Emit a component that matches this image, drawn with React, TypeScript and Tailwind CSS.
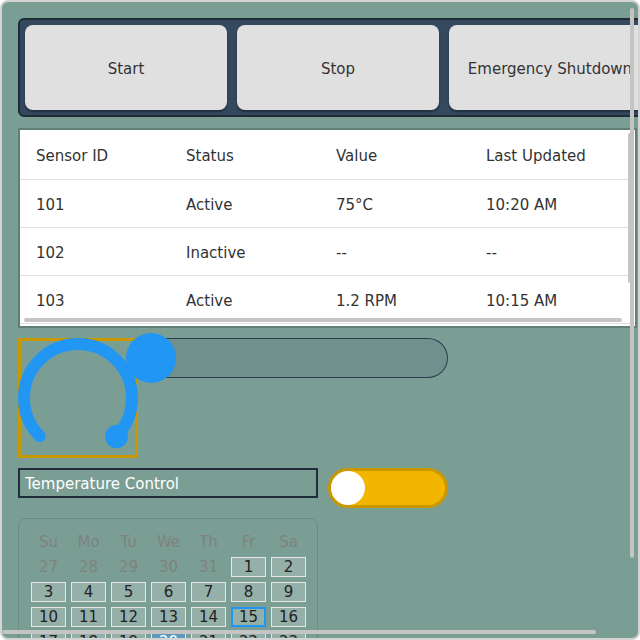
import React, { useState } from 'react';

const sensors = [
  { id: '101', status: 'Active', value: '75°C', updated: '10:20 AM' },
  { id: '102', status: 'Inactive', value: '--', updated: '--' },
  { id: '103', status: 'Active', value: '1.2 RPM', updated: '10:15 AM' },
  { id: '104', status: 'Active', value: '3.4 bar', updated: '10:05 AM' },
];

const weekdays = ['Su', 'Mo', 'Tu', 'We', 'Th', 'Fr', 'Sa'];

// the headless browser hides native scrollbars, so the thumbs are drawn on top
const thumb = 'pointer-events-none rounded-full bg-[#c4c4c4]';

const ControlBar: React.FC = () => (
  <div className="flex w-[640px] gap-[10px] rounded-md border-2 border-[#1e2b38] bg-[#34495e] p-[5px]">
    {['Start', 'Stop', 'Emergency Shutdown'].map(label => (
      <button
        key={label}
        className="h-[85px] w-[202px] shrink-0 rounded-lg bg-[#e0e0e0] pt-[3px] text-[15px] text-[#333] shadow-[0_2px_2px_rgba(0,0,0,0.35)]"
      >
        {label}
      </button>
    ))}
  </div>
);

const SensorTable: React.FC = () => (
  <div className="relative mt-px w-[619px]">
    <div className="h-[200px] w-[619px] overflow-hidden border-2 border-[#5f7f77] bg-white">
      <table className="w-[616px] table-fixed border-collapse text-left text-[15px] text-[#333]">
        <colgroup>
          <col className="w-[150px]" />
          <col className="w-[150px]" />
          <col className="w-[150px]" />
          <col className="w-[166px]" />
        </colgroup>
        <thead>
          <tr className="h-[49px] border-b border-[#e0e0e0]">
            <th className="pl-4 pt-1 font-normal">Sensor ID</th>
            <th className="pl-4 pt-1 font-normal">Status</th>
            <th className="pl-4 pt-1 font-normal">Value</th>
            <th className="pl-4 pt-1 font-normal">Last Updated</th>
          </tr>
        </thead>
        <tbody>
          {sensors.map(s => (
            <tr key={s.id} className="h-12 border-b border-[#e0e0e0]">
              <td className="pl-4 pt-1">{s.id}</td>
              <td className="pl-4 pt-1">{s.status}</td>
              <td className="pl-4 pt-1">{s.value}</td>
              <td className="pl-4 pt-1">{s.updated}</td>
            </tr>
          ))}
        </tbody>
      </table>
    </div>
    <div className={`absolute left-[610px] top-[5px] h-[150px] w-[4px] ${thumb}`} />
    <div className={`absolute left-[6px] top-[190px] h-[4px] w-[598px] ${thumb}`} />
  </div>
);

const Knob: React.FC = () => (
  <div className="h-[120px] w-[120px] shrink-0 border-[3px] border-[#c99700]">
    <svg width="120" height="120" viewBox="0 0 120 120" className="-m-[3px] block">
      <path
        d="M 21.8 98.2 A 54 54 0 1 1 98.2 98.2"
        fill="none"
        stroke="#2196f3"
        strokeWidth="12"
        strokeLinecap="round"
      />
      <circle cx="98.5" cy="98.5" r="11.5" fill="#2196f3" />
    </svg>
  </div>
);

const Slider: React.FC = () => (
  <div className="relative h-10 w-[310px] rounded-r-full border border-l-0 border-[#2c3e50] bg-[#6f908c]">
    <div className="absolute -left-[12px] -top-[6px] h-[50px] w-[50px] rounded-full bg-[#2196f3]" />
  </div>
);

const Toggle: React.FC = () => {
  const [on, setOn] = useState(false);
  return (
    <button
      onClick={() => setOn(!on)}
      className={`flex h-10 w-[120px] items-center rounded-full border-[3px] border-[#c99700] bg-[#f2b600] ${on ? 'justify-end' : 'justify-start'}`}
    >
      <span className="h-[34px] w-[34px] rounded-full bg-white" />
    </button>
  );
};

const Calendar: React.FC = () => {
  const prev = [27, 28, 29, 30, 31];
  const days = Array.from({ length: 31 }, (_, i) => i + 1);
  const next = [1, 2, 3];
  return (
    <div className="w-[300px] rounded-lg border border-[#6a8c84] px-3 pb-3 pt-[13px]">
      <div className="grid grid-cols-[repeat(7,35px)] gap-[5px] text-center text-[15px] leading-5">
        {weekdays.map(d => (
          <div key={d} className="h-5 text-[#7f8280]">{d}</div>
        ))}
        {prev.map(d => (
          <div key={`p${d}`} className="h-5 text-[#7f8280]">{d}</div>
        ))}
        {days.map(d => (
          <div
            key={d}
            className={
              d === 15
                ? 'h-5 border-2 border-[#2196f3] bg-[#94b0a9] leading-4 text-[#222]'
                : d === 20
                  ? 'h-5 border border-[#e6e6e6] bg-[#5b9bc0] leading-[18px] text-white'
                  : 'h-5 border border-[#e6e6e6] bg-[#94b0a9] leading-[18px] text-[#222]'
            }
          >
            {d}
          </div>
        ))}
        {next.map(d => (
          <div key={`n${d}`} className="h-5 text-[#7f8280]">{d}</div>
        ))}
      </div>
    </div>
  );
};

const App: React.FC = () => {
  return (
    <div className="relative h-screen w-full overflow-hidden rounded-lg border-2 border-[#d4d4d4] bg-[#7a9e94] font-['DejaVu_Sans',sans-serif]">
      <div className="h-full w-full overflow-auto p-4">
        <div className="flex w-max flex-col gap-[10px]">
          <ControlBar />
          <SensorTable />
          <div className="flex items-start">
            <Knob />
            <Slider />
          </div>
          <div className="flex items-start gap-[10px]">
            <input
              defaultValue="Temperature Control"
              className="h-[30px] w-[300px] border-2 border-[#1f2d3a] bg-transparent px-[5px] pt-px text-[15px] text-white outline-none"
            />
            <Toggle />
          </div>
          <Calendar />
        </div>
      </div>
      <div className={`absolute right-[4px] top-[6px] h-[550px] w-[4px] ${thumb}`} />
      <div className={`absolute bottom-[4px] left-0 h-[4px] w-[594px] ${thumb}`} />
    </div>
  );
};

export default App;
